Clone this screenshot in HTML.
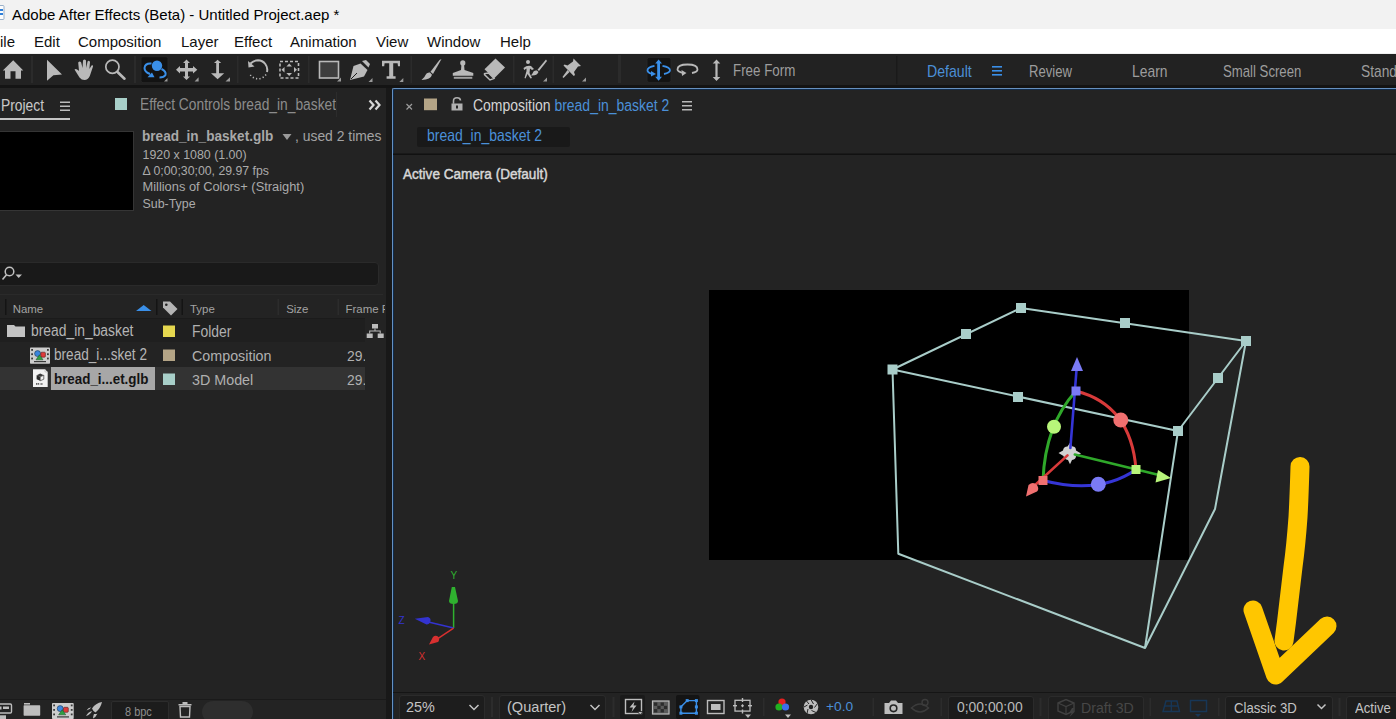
<!DOCTYPE html>
<html><head><meta charset="utf-8">
<style>
*{margin:0;padding:0;box-sizing:border-box}
html,body{width:1396px;height:719px;overflow:hidden;background:#232323;font-family:"Liberation Sans",sans-serif}
.a{position:absolute;white-space:nowrap}
.t{position:absolute;white-space:nowrap;line-height:1;transform-origin:0 0}
#title{left:0;top:0;width:1396px;height:29px;background:#f2f2f2}
#menu{left:0;top:29px;width:1396px;height:25px;background:#fff;border-bottom:1px solid #f0f0f0}
#tool{left:0;top:54px;width:1396px;height:31px;background:#222222}
#gap{left:0;top:85px;width:1396px;height:3px;background:#141414}
#lp{left:0;top:88px;width:386px;height:631px;background:#232323}
#sep{left:386px;top:88px;width:6px;height:631px;background:#181818}
#cp{left:392px;top:88px;width:1004px;height:631px;background:#232323;border-left:1px solid #6690bf;border-top:1px solid #6690bf;border-top-left-radius:2px;box-shadow:inset 1px 1px 0 #0f2a4a}
.mn{font-size:15px;color:#111;top:34px}
.gr{color:#a9a9a9}
</style></head><body>
<div class="a" id="title"></div>
<div class="a" id="menu"></div>
<div class="a" id="tool"></div>
<div class="a" id="gap"></div>
<div class="a" id="lp"></div>
<div class="a" id="sep"></div>
<div class="a" id="cp"></div>

<!-- title -->
<svg class="a" style="left:0;top:5px" width="6" height="16"><rect x="-6" y="0.5" width="10" height="14" rx="1" fill="#fdfdfd" stroke="#9bb0c8" stroke-width="1"/><rect x="-4" y="4" width="7" height="2" fill="#2f7fd8"/><rect x="-4" y="8" width="7" height="2" fill="#2f7fd8"/></svg>
<div class="t" style="left:12px;top:7px;font-size:15px;color:#000">Adobe After Effects (Beta) - Untitled Project.aep *</div>
<!-- menu -->
<div class="t mn" style="left:0px">ile</div>
<div class="t mn" style="left:34px">Edit</div>
<div class="t mn" style="left:78px">Composition</div>
<div class="t mn" style="left:181px">Layer</div>
<div class="t mn" style="left:234px">Effect</div>
<div class="t mn" style="left:290px">Animation</div>
<div class="t mn" style="left:376px">View</div>
<div class="t mn" style="left:427px">Window</div>
<div class="t mn" style="left:500px">Help</div>

<!-- toolbar -->
<svg class="a" style="left:0;top:54px" width="1396" height="31" viewBox="0 54 1396 31">
<g fill="#b9b9b9" stroke="none">
 <!-- home -->
 <path d="M13.2 60.3 L23.3 70.5 L21 70.5 L21 78.8 L15.5 78.8 L15.5 71.3 L10.5 71.3 L10.5 78.8 L5 78.8 L5 70.5 L2.8 70.5 Z"/>
 <!-- arrow -->
 <path d="M47 59.8 L62 74.6 L53.4 75.3 L47 80.8 Z"/>
 <!-- hand -->
 <path d="M74.5 69.5 Q76 68 78.5 70.5 L79 71 L78.2 62.5 Q79.8 60.5 81.2 62.5 L82.5 68 L83 60.5 Q84.5 58.5 86 60.5 L86.3 68 L87.5 61.5 Q89 60 90 62 L89.4 69 L91.5 65.5 Q93.2 64.5 93 66.5 L89.8 76 Q88 80 84.5 80 Q81.5 80 79.5 77.5 Z"/>
</g>
<g fill="none" stroke="#b9b9b9">
 <circle cx="112.4" cy="66.8" r="6.6" stroke-width="1.7"/>
 <path d="M117.5 72 L124.5 78.7" stroke-width="2.6" stroke-linecap="round"/>
</g>
<!-- separators -->
<g fill="#2b2b2b">
 <rect x="31" y="56" width="2" height="27"/>
 <rect x="134" y="56" width="2" height="27"/>
 <rect x="237" y="56" width="1.5" height="27"/>
 <rect x="308" y="56" width="1.5" height="27"/>
 <rect x="410.5" y="56" width="1.5" height="27"/>
 <rect x="513" y="56" width="1.5" height="27"/>
 <rect x="552.5" y="56" width="1.5" height="27"/>
 <rect x="618" y="55" width="3" height="28"/>
 <rect x="896" y="56" width="1.5" height="28" fill="#1a1a1a"/>
</g>
<!-- selected bgs -->
<rect x="141" y="56.7" width="27" height="26" rx="2" fill="#131313" stroke="#262626" stroke-width="1"/>
<rect x="647" y="57.4" width="24" height="25" rx="2" fill="#131313" stroke="#262626" stroke-width="1"/>
<!-- orbit blue -->
<g fill="#3a8fe8" stroke="#3a8fe8">
 <circle cx="157" cy="65.8" r="5.2" stroke="none"/>
 <path d="M151.5 63.5 Q145 63 144.5 68 Q144.5 72 150 74" fill="none" stroke-width="2"/>
 <path d="M147.5 77.2 L154.5 77.2 L152 72.5 Z" stroke="none"/>
 <path d="M161.5 69 Q166.5 71.5 165.5 75 Q164 77.5 159.5 77.5" fill="none" stroke-width="2"/>
</g>
<path d="M164 81.5 L167.5 81.5 L167.5 78 Z" fill="#9a9a9a"/>
<!-- move -->
<g fill="#b9b9b9">
 <path d="M186.5 59.4 L190 63 L188 63 L188 68 L193 68 L193 66 L197.3 69.7 L193 73.4 L193 71.4 L188 71.4 L188 76.4 L190 76.4 L186.5 80 L183 76.4 L185 76.4 L185 71.4 L180 71.4 L180 73.4 L176 69.7 L180 66 L180 68 L185 68 L185 63 L183 63 Z"/>
 <path d="M194.6 81.6 L198.6 81.6 L198.6 77.2 Z" fill="#9a9a9a"/>
 <!-- vertical arrow -->
 <path d="M217.6 59.7 L221.2 63 L219 63 L219 73.2 L224.2 73.2 L217.6 79.3 L211 73.2 L216.2 73.2 L216.2 63 L214 63 Z"/>
 <path d="M225.5 81.6 L230 81.6 L230 77.2 Z" fill="#9a9a9a"/>
</g>
<!-- rotate -->
<g fill="none" stroke="#b9b9b9">
 <path d="M250.5 63.5 Q254 60.3 258 60.3 A9.5 9.5 0 0 1 267 72" stroke-width="2"/>
 <path d="M266 74.5 A9.5 9.5 0 0 1 249.5 73.5" stroke-width="1.6" stroke-dasharray="1.2 2.2"/>
</g>
<path d="M248 61 L254.5 66.5 L248.5 67.5 Z" fill="#b9b9b9"/>
<!-- dashed box -->
<g fill="none" stroke="#b9b9b9" stroke-width="1.6">
 <rect x="280" y="61.5" width="18.5" height="16.5" stroke-dasharray="3 2"/>
</g>
<g fill="#b9b9b9">
 <path d="M289.2 63.5 L292 66.5 L286.4 66.5 Z"/>
 <path d="M289.2 76 L292 73 L286.4 73 Z"/>
 <path d="M281.5 69.7 L284.5 67 L284.5 72.4 Z"/>
 <path d="M297 69.7 L294 67 L294 72.4 Z"/>
</g>
<!-- rect tool -->
<rect x="319.5" y="61.5" width="19" height="16.5" fill="#3e3e3e" stroke="#b9b9b9" stroke-width="1.6"/>
<path d="M337 81.6 L341 81.6 L341 77.6 Z" fill="#9a9a9a"/>
<!-- pen -->
<g fill="#b9b9b9">
 <path d="M362 61 L366 60 L370 64 L368.5 67.5 Z"/>
 <path d="M360.5 63.5 L367.5 70 L364 76.5 L350 80 L353.5 66 Z"/>
 <path d="M368.5 82 L372.5 82 L372.5 78 Z" fill="#9a9a9a"/>
</g>
<path d="M351 79 L357 73" stroke="#1f1f1f" stroke-width="1"/>
<!-- T -->
<g fill="#b9b9b9">
 <path d="M382 60.7 L400 60.7 L400 66.3 L398 66.3 L397.6 63.2 L393.2 63.2 L393.2 76.3 L395.6 76.3 L395.6 78.8 L386.6 78.8 L386.6 76.3 L389.2 76.3 L389.2 63.2 L384.6 63.2 L384.2 66.3 L382 66.3 Z"/>
 <path d="M399.3 82 L403.3 82 L403.3 78 Z" fill="#9a9a9a"/>
</g>
<!-- brush -->
<g fill="#b9b9b9">
 <path d="M441.5 59 L433 74 L430.5 71.8 L439.5 60 Z"/>
 <path d="M430 72.5 L432 74.8 Q431 79.5 421.5 80 Q425 77 425.5 75 Q426.5 72 430 72.5 Z"/>
</g>
<!-- stamp -->
<g fill="#b9b9b9">
 <circle cx="462.8" cy="62.9" r="2.6"/>
 <path d="M461.5 64 L464 64 L464.5 70 L469 71.5 L473.3 72.9 L473.3 75.7 L452.8 75.7 L452.8 72.9 L457 71.5 L461 70 Z"/>
 <rect x="453.8" y="76.8" width="18.5" height="2" fill="#a0a0a0"/>
</g>
<!-- eraser -->
<g>
 <path d="M495.5 58.4 L505 67.5 L494 78.5 L484.5 69.2 Z" fill="#b9b9b9"/>
 <path d="M488.5 73 L494 78.5 L490 80 L484.5 74.6 L484.5 73.5 Z" fill="none" stroke="#b9b9b9" stroke-width="1.4"/>
</g>
<!-- roto -->
<g fill="#b9b9b9">
 <circle cx="528" cy="62" r="2"/>
 <path d="M523.5 68 Q527 65 531 66 L534 69 L532 70 L530 68.5 L529.5 73 L532 78 L530.5 78.5 L527.5 74 L525.5 78.5 L524.5 78 L526.5 71 L526.5 68.5 L524.2 70 Z"/>
 <path d="M546 59.5 L547 61 L539 71 L537.5 69.8 Z"/>
 <path d="M537 70.5 L538.5 72 Q537 76 531 75.5 Q533 73 533.5 71.5 Q535 70 537 70.5 Z"/>
 <path d="M543 81.5 L547 81.5 L547 77.5 Z" fill="#9a9a9a"/>
</g>
<!-- pin -->
<g fill="#b9b9b9">
 <path d="M574.5 59.5 L581 66 L578 66.5 L574 72 L575 75 L573.8 76 L563.5 65.5 L564.5 64.5 L567.5 65.5 L573 61.5 L573.5 58.5 Z"/>
 <path d="M567.5 70 L569.5 72 L563.5 78 L562.5 77 Z"/>
 <path d="M582 81.5 L586 81.5 L586 77.5 Z" fill="#9a9a9a"/>
</g>
<!-- orbit around blue -->
<g fill="#3a8fe8">
 <path d="M658.6 59.6 L662 63.5 L660 63.5 L660 76.8 L662 76.8 L658.6 80.7 L655.2 76.8 L657.2 76.8 L657.2 63.5 L655.2 63.5 Z"/>
 <path d="M654.5 65.8 Q647.5 67 647.5 70.3 Q647.5 72.8 652 74" fill="none" stroke="#3a8fe8" stroke-width="1.8"/>
 <path d="M651 76.5 L656 74 L651 71 Z"/>
 <path d="M662.5 65.8 Q670 67 670 70.3 Q670 72.8 664 74" fill="none" stroke="#3a8fe8" stroke-width="1.8"/>
</g>
<!-- loop -->
<g>
 <path d="M683 73 Q677.5 71.5 677.5 69.5 Q677.5 64.5 687.5 64.5 Q697.5 64.5 697.5 69.5 Q697.5 72 692 73" fill="none" stroke="#b9b9b9" stroke-width="1.8"/>
 <path d="M682 76 L686.5 73 L681.5 70 Z" fill="#b9b9b9"/>
</g>
<!-- vertical double arrow -->
<path d="M716.5 59.6 L720.3 63.5 L717.6 63.5 L717.6 77 L720.3 77 L716.5 81 L712.7 77 L715.4 77 L715.4 63.5 L712.7 63.5 Z" fill="#b9b9b9"/>
<!-- workspace hamburger -->
<g fill="#3a8fe8"><rect x="992" y="66" width="10" height="1.6"/><rect x="992" y="70" width="10" height="1.6"/><rect x="992" y="74" width="10" height="1.6"/></g>
</svg>
<div class="t" style="left:732.73px;top:62.25px;font-size:16.3px;transform:scaleX(0.821);color:#9d9d9d">Free Form</div>
<div class="t" style="left:926.57px;top:63.14px;font-size:16.38px;transform:scaleX(0.864);color:#4b8fd6">Default</div>
<div class="t" style="left:1028.95px;top:63.14px;font-size:16.38px;transform:scaleX(0.801);color:#9d9d9d">Review</div>
<div class="t" style="left:1131.89px;top:63.14px;font-size:16.38px;transform:scaleX(0.849);color:#9d9d9d">Learn</div>
<div class="t" style="left:1223.41px;top:63.34px;font-size:16.14px;transform:scaleX(0.817);color:#9d9d9d">Small Screen</div>
<div class="t" style="left:1361px;top:63.14px;font-size:16.38px;transform:scaleX(0.84);color:#9d9d9d">Standard</div>

<!-- LEFT PANEL -->
<div class="t" style="left:0.59px;top:97.48px;font-size:16.09px;transform:scaleX(0.861);color:#c9c9c9">Project</div>
<svg class="a" style="left:0;top:88px" width="386" height="40" viewBox="0 88 386 40">
 <g fill="#bdbdbd"><rect x="60" y="101.5" width="10" height="1.5"/><rect x="60" y="105.5" width="10" height="1.5"/><rect x="60" y="109.5" width="10" height="1.5"/></g>
 <rect x="0" y="118" width="70" height="2" fill="#c4c4c4"/>
 <rect x="115" y="98" width="12" height="12" fill="#a8cfc9"/>
 <rect x="336" y="92" width="1" height="25" fill="#2c2c2c"/>
 <path d="M369.5 100.5 L373.5 105 L369.5 109.5" fill="none" stroke="#d6d6d6" stroke-width="2.2"/>
 <path d="M375.5 100.5 L379.5 105 L375.5 109.5" fill="none" stroke="#d6d6d6" stroke-width="2.2"/>
</svg>
<div class="a" style="left:141px;top:92px;width:195px;height:26px;overflow:hidden"><div class="t" style="left:-0.60px;top:5.35px;font-size:15.65px;transform:scaleX(0.882);color:#8c8c8c">Effect Controls bread_in_basket 2</div></div>
<!-- thumbnail -->
<div class="a" style="left:-1px;top:131px;width:135px;height:80px;background:#000;border:1px solid #353535"></div>
<div class="t" style="left:141.82px;top:128.99px;font-size:14.9px;transform:scaleX(0.912);font-weight:bold;color:#a9a9a9">bread_in_basket.glb</div>
<svg class="a" style="left:280px;top:132px" width="14" height="10"><path d="M2.5 2 L11.5 2 L7 8 Z" fill="#9a9a9a"/></svg>
<div class="t" style="left:295.45px;top:128.99px;font-size:14.9px;transform:scaleX(0.933);color:#a3a3a3">, used 2 times</div>
<div class="t" style="left:142.5px;top:148.7px;font-size:12.4px;color:#ababab">1920 x 1080 (1.00)</div>
<div class="t" style="left:142.5px;top:164.7px;font-size:12.3px;color:#ababab">Δ 0;00;30;00, 29.97 fps</div>
<div class="t" style="left:142.5px;top:180.7px;font-size:12.85px;color:#ababab">Millions of Colors+ (Straight)</div>
<div class="t" style="left:142.5px;top:197.7px;font-size:12.4px;color:#ababab">Sub-Type</div>
<!-- search -->
<div class="a" style="left:-4px;top:262px;width:383px;height:23.5px;background:#191919;border:1px solid #2a2a2a;border-radius:4px"></div>
<svg class="a" style="left:0;top:262px" width="30" height="24" viewBox="0 262 30 24">
 <circle cx="9.5" cy="271.5" r="4.3" fill="none" stroke="#c0c0c0" stroke-width="1.5"/>
 <path d="M6.5 274.8 L2.5 279.5" stroke="#c0c0c0" stroke-width="1.6"/>
 <path d="M15.5 274.5 L22 274.5 L18.7 278 Z" fill="#c0c0c0"/>
</svg>
<!-- list header -->
<div class="a" style="left:0;top:294px;width:383px;height:1px;background:#2a2a2a"></div>
<div class="a" style="left:0;top:318px;width:365px;height:1px;background:#1b1b1b"></div>
<svg class="a" style="left:0;top:295px" width="386" height="24" viewBox="0 295 386 24">
 <g fill="#141414"><rect x="5" y="299" width="1.5" height="16"/><rect x="156" y="299" width="1.5" height="16"/><rect x="181.5" y="299" width="1.5" height="16"/></g>
 <g fill="#2c2c2c"><rect x="277.5" y="299" width="1.5" height="16"/><rect x="337.5" y="299" width="1.5" height="16"/></g>
 <path d="M136 311 L143.7 305 L151.5 311 Z" fill="#3a8fe8"/>
 <path d="M163 301.5 L170 301.5 L177.5 309 L171 315.5 L163 307.5 Z" fill="#b4b4b4"/>
 <circle cx="166.3" cy="304.8" r="1.3" fill="#232323"/>
</svg>
<div class="t" style="left:12.68px;top:303.51px;font-size:11.45px;color:#a2a2a2">Name</div>
<div class="t" style="left:189.98px;top:303.51px;font-size:11.45px;color:#a2a2a2">Type</div>
<div class="t" style="left:286.18px;top:303.51px;font-size:11.45px;color:#a2a2a2">Size</div>
<div class="a" style="left:346px;top:300px;width:39px;height:16px;overflow:hidden"><div class="t" style="left:-0.5px;top:3.51px;font-size:11.45px;color:#a2a2a2">Frame Rate</div></div>
<!-- rows -->
<div class="a" style="left:0;top:319px;width:365px;height:23px;background:#1f1f1f"></div>
<div class="a" style="left:0;top:342.5px;width:365px;height:1px;background:#1b1b1b"></div>
<div class="a" style="left:0;top:343px;width:365px;height:23px;background:#232323"></div>
<div class="a" style="left:0;top:367px;width:365px;height:22.5px;background:#333333"></div>
<div class="a" style="left:51px;top:367px;width:104px;height:22.5px;background:#a7a7a7"></div>
<svg class="a" style="left:0;top:318px" width="386" height="74" viewBox="0 318 386 74">
 <!-- folder -->
 <path d="M7 325 L14 325 L15.5 326.5 L25 326.5 L25 337 L7 337 Z" fill="#c3c3c3"/>
 <!-- comp icon -->
 <rect x="30" y="347.5" width="20" height="16.2" rx="0.8" fill="#cdcdcd"/>
 <g fill="#3a3a3a"><rect x="31.2" y="349" width="1.8" height="1.8"/><rect x="31.2" y="353.3" width="1.8" height="1.8"/><rect x="31.2" y="357.6" width="1.8" height="1.8"/><rect x="47" y="349" width="1.8" height="1.8"/><rect x="47" y="353.3" width="1.8" height="1.8"/><rect x="47" y="357.6" width="1.8" height="1.8"/><rect x="34" y="361" width="12" height="1.2"/></g>
 <circle cx="37.6" cy="353.6" r="3" fill="#3c86dc" stroke="#1f3550" stroke-width="0.6"/>
 <rect x="40.8" y="352.2" width="4.6" height="5" rx="1" fill="#e03a3a" stroke="#502020" stroke-width="0.6"/>
 <path d="M36 359.8 L39.5 354.8 L43 359.8 Z" fill="#2ea043" stroke="#1d4a24" stroke-width="0.5"/>
 <!-- glb icon -->
 <path d="M33 369.3 L45 369.3 L47.7 372 L47.7 387 L33 387 Z" fill="#f2f2f2"/>
 <path d="M45 369.3 L45 372 L47.7 372" fill="none" stroke="#b5b5b5" stroke-width="0.6"/>
 <path d="M36.6 375.2 L40.2 373.6 L43.8 375.2 L40.2 376.8 Z" fill="#3c3c3c"/>
 <path d="M36.6 375.2 L40.2 376.8 L40.2 380.8 L36.6 379.2 Z" fill="#2a2a2a"/>
 <path d="M40.2 376.8 L43.8 375.2 L43.8 379.2 L40.2 380.8 Z" fill="#f2f2f2" stroke="#3a3a3a" stroke-width="0.7"/>
 <path d="M36.5 385 L36.5 383 L37.6 384.3 L38.7 383 L38.7 385 M40.5 383 L42.5 385 M42.5 383 L40.5 385" fill="none" stroke="#444" stroke-width="0.7"/>
 <!-- labels -->
 <rect x="163" y="325.5" width="12" height="11.5" fill="#e5d74f"/>
 <rect x="163" y="349.5" width="12" height="11.5" fill="#b4a486"/>
 <rect x="163" y="373.5" width="12" height="11.5" fill="#a8cfc9"/>
 <!-- network -->
 <g fill="#bcbcbc"><rect x="372" y="324" width="6" height="4.5"/><rect x="366.7" y="333.5" width="6" height="4.5"/><rect x="377.7" y="333.5" width="6" height="4.5"/>
 <path d="M374.5 328.5 L375.5 328.5 L375.5 330.5 L380.7 330.5 L380.7 333.5 L379.7 333.5 L379.7 331.5 L370.2 331.5 L370.2 333.5 L369.2 333.5 L369.2 330.5 L374.5 330.5 Z"/></g>
</svg>
<div class="t" style="left:31.0px;top:323.26px;font-size:16.0px;transform:scaleX(0.866);color:#b5b5b5">bread_in_basket</div>
<div class="t" style="left:53.82px;top:347.36px;font-size:16.0px;transform:scaleX(0.85);color:#b5b5b5">bread_i...sket 2</div>
<div class="t" style="left:53.83px;top:372.12px;font-size:14.62px;transform:scaleX(0.915);font-weight:bold;color:#141414">bread_i...et.glb</div>
<div class="t" style="left:191.59px;top:323.8px;font-size:15.65px;transform:scaleX(0.89);color:#b0b0b0">Folder</div>
<div class="t" style="left:191.98px;top:347.64px;font-size:15.43px;transform:scaleX(0.927);color:#b0b0b0">Composition</div>
<div class="t" style="left:192.13px;top:371.7px;font-size:15.36px;transform:scaleX(0.932);color:#b0b0b0">3D Model</div>
<div class="a" style="left:346px;top:343px;width:19px;height:46px;overflow:hidden">
 <div class="t" style="left:0.5px;top:4.64px;font-size:15.43px;transform:scaleX(0.9);color:#b0b0b0">29.97</div>
 <div class="t" style="left:0.5px;top:28.70px;font-size:15.36px;transform:scaleX(0.9);color:#b0b0b0">29.97</div>
</div>
<!-- bottom bar -->
<div class="a" style="left:0;top:699px;width:386px;height:1px;background:#1a1a1a"></div>
<svg class="a" style="left:0;top:699px" width="386" height="20" viewBox="0 699 386 20">
 <g fill="#bdbdbd">
  <rect x="-3" y="704" width="14.5" height="9" rx="1.2" fill="none" stroke="#bdbdbd" stroke-width="1.4"/>
  <rect x="-1" y="706.5" width="2.5" height="3" />
  <rect x="3" y="706.5" width="6" height="2.5"/>
  <rect x="-2" y="715.3" width="8" height="4"/>
  <rect x="24" y="703" width="6" height="1.6"/>
  <rect x="23.6" y="705.3" width="16.6" height="10.4" rx="0.6"/>
  <rect x="52" y="703" width="21.7" height="16" rx="0.8" fill="#cdcdcd"/>
  <path d="M86 716 Q88 712 92 711 Q90.5 714.5 86 716 Z M92 708.5 Q95.5 703 102 702 Q100.5 708.5 95.5 712.5 Q93.5 712 92 708.5 Z M94 714 Q96.5 714.3 97.5 713.5 Q96 717 93 718.5 Q93 716 94 714 Z M86.5 710.5 Q88 707.5 91.2 707.2 Q90.5 709 86.5 710.5 Z"/>
  <path d="M178.5 704 L191.5 704 L191.5 705.5 L178.5 705.5 Z"/>
  <rect x="182.5" y="702" width="5" height="2"/>
  <path d="M180 706.5 L190 706.5 L189.5 717 L180.5 717 Z" fill="none" stroke="#bdbdbd" stroke-width="1.4"/>
 </g>
 <g fill="#3a3a3a"><rect x="53.2" y="704.5" width="1.8" height="1.8"/><rect x="53.2" y="709" width="1.8" height="1.8"/><rect x="53.2" y="713.5" width="1.8" height="1.8"/><rect x="70.8" y="704.5" width="1.8" height="1.8"/><rect x="70.8" y="709" width="1.8" height="1.8"/><rect x="70.8" y="713.5" width="1.8" height="1.8"/><rect x="57" y="716.3" width="12" height="1.2"/></g>
 <circle cx="60.2" cy="708.6" r="3" fill="#3c86dc" stroke="#1f3550" stroke-width="0.6"/>
 <rect x="63.5" y="707.3" width="4.8" height="5" rx="1" fill="#e03a3a" stroke="#502020" stroke-width="0.6"/>
 <path d="M58.6 714.8 L62.2 709.8 L65.8 714.8 Z" fill="#2ea043" stroke="#1d4a24" stroke-width="0.5"/>
 <g fill="#232323"><rect x="183" y="708" width="1" height="7"/><rect x="186" y="708" width="1" height="7"/></g>
</svg>
<div class="a" style="left:111px;top:701px;width:57.5px;height:20px;background:#1c1c1c;border:1px solid #2c2c2c;border-radius:2px"></div>
<div class="t" style="left:125.2px;top:706.02px;font-size:12.14px;transform:scaleX(0.905);color:#8e8e8e">8 bpc</div>
<div class="a" style="left:202px;top:700.5px;width:51px;height:22px;background:#2e2e2e;border-radius:11px"></div>

<!-- COMP PANEL -->
<svg class="a" style="left:393px;top:89px" width="1003" height="66" viewBox="393 89 1003 66">
 <path d="M406.5 104 L412 109.5 M412 104 L406.5 109.5" stroke="#9c9c9c" stroke-width="1.2"/>
 <rect x="424" y="98.5" width="13" height="11.7" fill="#b4a486"/>
 <g fill="#b0b0b0">
  <path d="M451.5 103.5 L462.5 103.5 L462.5 110.5 L451.5 110.5 Z"/>
  <path d="M453.5 103.8 L453.5 101 Q453.5 97.8 457 97.8 Q460.3 97.8 460.5 100.5" fill="none" stroke="#b0b0b0" stroke-width="1.6"/>
 </g>
 <rect x="456" y="105.5" width="2" height="3" fill="#232323"/>
 <g fill="#b9b9b9"><rect x="682" y="101" width="10" height="1.5"/><rect x="682" y="105" width="10" height="1.5"/><rect x="682" y="109" width="10" height="1.5"/></g>
 <rect x="417" y="127" width="153" height="20" rx="2" fill="#191919"/>
 <rect x="393" y="153.5" width="1003" height="1.5" fill="#111"/>
</svg>
<div class="t" style="left:473.1px;top:97.31px;font-size:16.29px;transform:scaleX(0.857);color:#d4d4d4">Composition <span style="color:#4b90d8">bread_in_basket 2</span></div>
<div class="t" style="left:427.09px;top:127.97px;font-size:15.86px;transform:scaleX(0.882);color:#4b90d8">bread_in_basket 2</div>
<div class="t" style="left:403.3px;top:167.95px;font-size:13.77px;transform:scaleX(0.985);color:#d8d8d8;-webkit-text-stroke:0.45px #d8d8d8">Active Camera (Default)</div>
<!-- viewer black -->
<div class="a" style="left:709px;top:290px;width:480px;height:269.5px;background:#000"></div>
<svg class="a" style="left:393px;top:155px" width="1003" height="537" viewBox="393 155 1003 537">
 <g stroke="#a9cdc9" stroke-width="2" fill="none" stroke-linejoin="round">
  <path d="M892.5 369.5 L1021 308 L1246 341 L1178 431 Z"/>
  <path d="M892.5 369.5 L898.3 553.7 L1145 648 L1178 431"/>
  <path d="M1246 341 L1215 509 L1145 648"/>
 </g>
 <g fill="#a9cdc9">
  <rect x="887.5" y="364.5" width="10" height="10"/>
  <rect x="1016.0" y="303.0" width="10" height="10"/>
  <rect x="1241.0" y="336.0" width="10" height="10"/>
  <rect x="1173.0" y="426.0" width="10" height="10"/>
  <rect x="961.0" y="329.0" width="10" height="10"/>
  <rect x="1120.0" y="318.0" width="10" height="10"/>
  <rect x="1213.0" y="373.0" width="10" height="10"/>
  <rect x="1013.0" y="392.0" width="10" height="10"/>
 </g>
 <!-- gizmo -->
 <g fill="none" stroke-width="3" stroke-linecap="round">
  <path d="M1076 391 Q1131 405 1136 469.5" stroke="#d83a3a"/>
  <path d="M1076 391 Q1045 425 1043 480.5" stroke="#2fa82a"/>
  <path d="M1043 480.5 Q1100 495 1136 469.5" stroke="#3535d6"/>
 </g>
 <path d="M1070 442.8 L1072.5 446.5 Q1076 446.5 1076 450.5 L1081 453.5 L1076 456 Q1076 459.5 1072 460 L1070 464.2 L1068 460 Q1064 459.5 1063.5 456 L1058.5 453 L1063 450.5 Q1063.5 446.5 1067.5 446.5 Z" fill="#d2d2d2"/>
 <g stroke-width="2.6" stroke-linecap="round">
  <path d="M1070.4 448 L1076.5 370" stroke="#3535d6"/>
  <path d="M1074.8 454.5 L1157 474.5" stroke="#2fa82a"/>
  <path d="M1067.5 455.4 L1034 486" stroke="#d83a3a"/>
 </g>
 <path d="M1077 357 L1083 371 L1071 371 Z" fill="#7a7af5"/>
 <path d="M1171 478 L1155.5 482.5 L1158 470 Z" fill="#b8f57a"/>
 <path d="M1026 496.5 L1028.5 485 Q1033 481 1037 485 Q1039.5 489 1037 491.5 Z" fill="#f07070"/>
 <rect x="1071.5" y="386.5" width="9" height="9" fill="#7a7af5"/>
 <rect x="1131.5" y="465" width="9" height="9" fill="#b8f57a"/>
 <rect x="1038.5" y="476" width="9" height="9" fill="#f07070"/>
 <circle cx="1120.8" cy="420" r="7.5" fill="#f07070"/>
 <circle cx="1054" cy="426.8" r="7" fill="#b8f57a"/>
 <circle cx="1098.3" cy="484.2" r="7.5" fill="#7a7af5"/>
 <!-- axis indicator -->
 <g stroke-width="1.5" fill="none">
  <path d="M453.6 628 L453.6 600" stroke="#2fb12f"/>
  <path d="M453.6 628 L420 620" stroke="#3333d0"/>
  <path d="M453.6 628 L434 641" stroke="#d83030"/>
 </g>
 <path d="M451.8 587 L455 587 L458 601 Q458 604 453.5 604 Q449 604 449 601 Z" fill="#2fb12f"/>
 <path d="M414.8 618.7 L428 617 Q431 618 430.5 621 Q429.5 624.5 426.5 624.5 Z" fill="#3333d0"/>
 <path d="M429 644.5 L433 637 Q435.5 634.5 438.5 637 Q440 640 438 642 Z" fill="#d83030"/>
 <text x="450.5" y="578.5" font-family="Liberation Sans" font-size="10" fill="#2fb12f">Y</text>
 <text x="398.5" y="623.5" font-family="Liberation Sans" font-size="10" fill="#3333d0">Z</text>
 <text x="418.5" y="660" font-family="Liberation Sans" font-size="10" fill="#d83030">X</text>
 <!-- yellow arrow -->
 <g stroke="#ffc600" stroke-width="19" fill="none" stroke-linecap="round" stroke-linejoin="round">
  <path d="M1300 466.5 Q1299 500 1298 517 Q1296 545 1293 567 Q1289 600 1286.5 622 L1284 641"/>
  <path d="M1253 610 L1275.5 675 L1327 626"/>
 </g>
</svg>
<!-- bottom toolbar -->
<div class="a" style="left:393px;top:691.5px;width:1003px;height:1.5px;background:#151515"></div>
<div class="a" style="left:398.5px;top:695px;width:86px;height:26px;background:#1d1d1d;border:1px solid #2b2b2b;border-radius:3px"></div>
<div class="a" style="left:498.5px;top:695px;width:107px;height:26px;background:#1d1d1d;border:1px solid #2b2b2b;border-radius:3px"></div>
<div class="a" style="left:947.5px;top:695.5px;width:86.5px;height:26px;background:#1b1b1b;border:1px solid #2b2b2b;border-radius:3px"></div>
<div class="a" style="left:1047.5px;top:695.5px;width:96px;height:26px;background:#1f1f1f;border:1px solid #2b2b2b;border-radius:3px"></div>
<div class="a" style="left:1225px;top:696px;width:107.5px;height:26px;background:#1d1d1d;border:1px solid #2b2b2b;border-radius:3px"></div>
<div class="a" style="left:1346px;top:696px;width:60px;height:26px;background:#1d1d1d;border:1px solid #2b2b2b;border-radius:3px"></div>
<div class="t" style="left:406.28px;top:699.06px;font-size:15.29px;transform:scaleX(0.939);color:#c4c4c4">25%</div>
<div class="t" style="left:506.83px;top:699.36px;font-size:15.29px;transform:scaleX(0.953);color:#c4c4c4">(Quarter)</div>
<div class="t" style="left:826.41px;top:700.82px;font-size:12.86px;transform:scaleX(1.07);color:#4b8fd6">+0.0</div>
<div class="t" style="left:957.34px;top:699.85px;font-size:14.0px;transform:scaleX(0.992);color:#b9b9b9">0;00;00;00</div>
<div class="t" style="left:1080.87px;top:701px;font-size:14.64px;transform:scaleX(0.969);color:#474747">Draft 3D</div>
<div class="t" style="left:1233.74px;top:701.19px;font-size:14.43px;transform:scaleX(0.912);color:#c4c4c4">Classic 3D</div>
<div class="t" style="left:1354.8px;top:701.19px;font-size:14.43px;transform:scaleX(0.912);color:#c4c4c4">Active</div>
<svg class="a" style="left:393px;top:693px" width="1003" height="26" viewBox="393 693 1003 26">
 <g fill="none" stroke="#c4c4c4" stroke-width="1.5">
  <path d="M469.5 705 L474 709.5 L478.5 705"/>
  <path d="M590.5 705 L595 709.5 L599.5 705"/>
  <path d="M1317.5 704.5 L1321.5 708.5 L1325.5 704.5"/>
 </g>
 <g fill="#2c2c2c"><rect x="491" y="697" width="2" height="20"/><rect x="612.5" y="697" width="2" height="20"/><rect x="763" y="698" width="1.5" height="18"/><rect x="872.5" y="698" width="1.5" height="18"/><rect x="940.5" y="698" width="1.5" height="18"/><rect x="1039.5" y="698" width="2" height="18"/><rect x="1149.5" y="698" width="1.5" height="18"/><rect x="1218" y="698" width="1.5" height="18"/><rect x="1338.5" y="698" width="2" height="18"/></g>
 <rect x="620" y="695" width="25" height="24" rx="2" fill="#1a1a1a"/>
 <rect x="676" y="695" width="23.5" height="24" rx="2" fill="#141414"/>
 <!-- fast preview -->
 <rect x="625.5" y="699.5" width="16" height="14" fill="none" stroke="#bdbdbd" stroke-width="1.4"/>
 <path d="M634.5 701.5 L629.5 707.5 L633 707.5 L631.5 712 L636.5 705.5 L633.5 705.5 Z" fill="#bdbdbd"/>
 <path d="M637.5 711.5 L643 711.5 L640.2 715 Z" fill="#bdbdbd" stroke="#1a1a1a" stroke-width="0.8"/>
 <!-- checker -->
 <rect x="652.5" y="701" width="16.5" height="13" fill="#5a5a5a" stroke="#bdbdbd" stroke-width="1.2"/>
 <g fill="#2c2c2c"><rect x="654" y="702.5" width="3.3" height="3.3"/><rect x="660.6" y="702.5" width="3.3" height="3.3"/><rect x="657.3" y="705.8" width="3.3" height="3.3"/><rect x="663.9" y="705.8" width="3.3" height="3.3"/><rect x="654" y="709.1" width="3.3" height="3.3"/><rect x="660.6" y="709.1" width="3.3" height="3.3"/></g>
 <!-- mask -->
 <path d="M687.2 700.6 L696.4 700.6 L696.4 713.2 L680.9 713.2 L680.9 706.9 Z" fill="none" stroke="#3a8fe8" stroke-width="1.4"/>
 <g fill="#3a8fe8"><rect x="685.7" y="699.1" width="3" height="3"/><rect x="694.9" y="699.1" width="3" height="3"/><rect x="694.9" y="711.7" width="3" height="3"/><rect x="679.4" y="711.7" width="3" height="3"/><rect x="679.4" y="705.4" width="3" height="3"/><rect x="694.9" y="705.4" width="3" height="3"/></g>
 <!-- region of interest -->
 <rect x="707.5" y="700.5" width="16.5" height="13" fill="none" stroke="#bdbdbd" stroke-width="1.4"/>
 <rect x="711" y="704" width="9.5" height="6" fill="#bdbdbd"/>
 <!-- safe zones -->
 <rect x="735" y="700.3" width="15" height="10.8" fill="none" stroke="#bdbdbd" stroke-width="1.3"/>
 <g fill="#bdbdbd"><rect x="741.8" y="698" width="1.4" height="4"/><rect x="741.8" y="709.5" width="1.4" height="4"/><rect x="733" y="705" width="4" height="1.4"/><rect x="748" y="705" width="4" height="1.4"/><path d="M742.5 704 L744 705.7 L742.5 707.4 L741 705.7 Z"/></g>
 <path d="M745 714.5 L751 714.5 L748 718 Z" fill="#bdbdbd"/>
 <!-- rgb -->
 <circle cx="782" cy="702" r="3.6" fill="#e52020"/>
 <circle cx="779" cy="707" r="3.6" fill="#20b020"/>
 <circle cx="785.5" cy="707" r="3.6" fill="#3f6fe8"/>
 <path d="M785 714.5 L791 714.5 L788 718 Z" fill="#bdbdbd"/>
 <!-- aperture -->
 <circle cx="811" cy="707" r="7.3" fill="#bdbdbd"/>
 <circle cx="811" cy="707" r="2.2" fill="#232323"/>
 <g stroke="#232323" stroke-width="1"><path d="M811 699.7 L813.5 704"/><path d="M817.5 703.5 L814.5 707.5"/><path d="M816 712.5 L811.5 710.5"/><path d="M807 713.5 L808 709"/><path d="M804 707 L807.5 705"/><path d="M806.5 701 L809 704"/></g>
 <!-- camera -->
 <path d="M884.5 703 L889 703 L891 700.5 L896 700.5 L898 703 L902.5 703 L902.5 714 L884.5 714 Z" fill="#bdbdbd"/>
 <circle cx="893.5" cy="708.3" r="3.3" fill="none" stroke="#232323" stroke-width="1.6"/>
 <!-- eye dim -->
 <path d="M911.5 708 Q920 700 928.5 708 Q920 716 911.5 708 Z" fill="none" stroke="#3c3c3c" stroke-width="1.6"/>
 <circle cx="925" cy="702.5" r="3" fill="none" stroke="#3c3c3c" stroke-width="1.4"/>
 <!-- draft 3d cube icon dim -->
 <path d="M1058 703 L1066 699.5 L1074 703 L1074 711 L1066 714.5 L1058 711 Z" fill="none" stroke="#404040" stroke-width="1.4"/>
 <path d="M1058 703 L1066 706.5 L1074 703 M1066 706.5 L1066 714.5" fill="none" stroke="#404040" stroke-width="1.2"/>
 <path d="M1072 708 L1069 713 L1071.5 713 L1069.5 717 L1075 711.5 L1072.5 711.5 L1074 708 Z" fill="#404040"/>
 <!-- dim blue grid -->
 <path d="M1166 701 L1177 701 L1179.5 711.5 L1163 711.5 Z M1171.3 701 L1171.3 711.5 M1164.5 706 L1178.5 706" fill="none" stroke="#173656" stroke-width="1.4"/>
 <rect x="1190.5" y="700.5" width="16" height="11" fill="none" stroke="#173656" stroke-width="1.5"/>
 <path d="M1195 714 L1201 714 L1198 717 Z" fill="#173656"/>
</svg>

</body></html>
